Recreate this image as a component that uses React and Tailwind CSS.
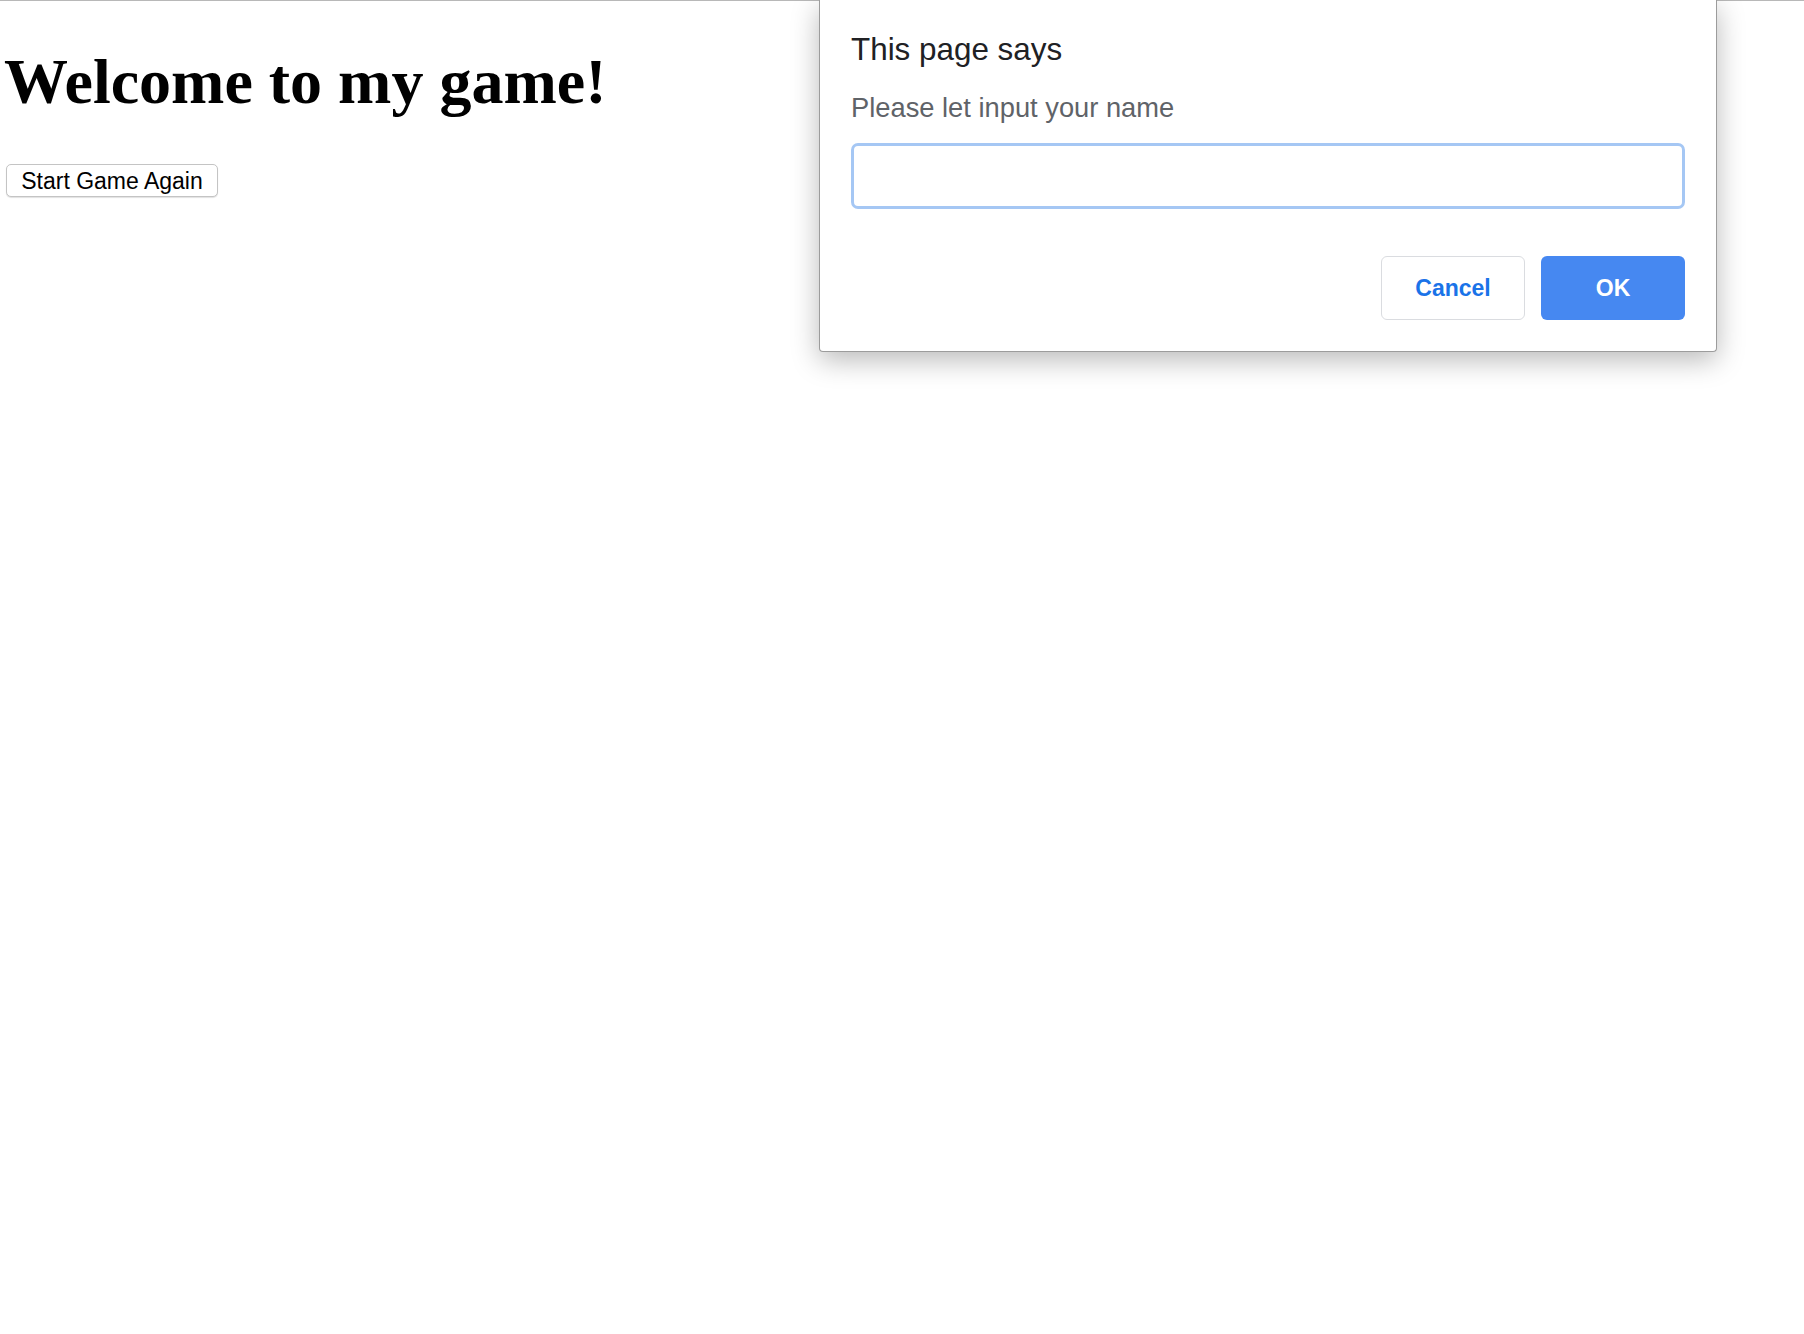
export default function App() {
  return (
    <div className="relative min-h-[1334px] w-full bg-white overflow-hidden">
      <div className="h-px w-full bg-[#b8b8b8]" />
      <div className="pl-[4px]">
        <h1 className="mt-[49px] text-[64px] leading-[63px] font-bold text-black whitespace-nowrap [font-family:'Liberation_Serif','Times_New_Roman',serif]">
          Welcome to my game!
        </h1>
        <button className="mt-[51px] ml-[2px] block h-[33px] w-[212px] rounded-[5px] border border-[#c4c4c4] bg-white pt-px text-center text-[23px] leading-[30px] text-black shadow-[0_1px_1px_rgba(0,0,0,0.12)] [font-family:'Liberation_Sans',Arial,sans-serif]">
          Start Game Again
        </button>
      </div>

      <div className="absolute left-[819px] top-0 w-[898px] rounded-b-[4px] border border-t-0 border-[#9c9c9c] bg-white px-[31px] pt-[32px] pb-[31px] shadow-[0_8px_28px_rgba(0,0,0,0.28)] [font-family:'Liberation_Sans',Arial,sans-serif]">
        <div className="text-[31.4px] leading-[36px] text-[#202124]">This page says</div>
        <div className="mt-[24px] text-[27.3px] leading-[32px] text-[#5f6368]">Please let input your name</div>
        <div className="mt-[19px] h-[66px] w-full rounded-[7px] border-[3px] border-[#a5c7f4] bg-white" />
        <div className="mt-[47px] flex justify-end gap-[16px]">
          <button className="flex h-[64px] w-[144px] items-center justify-center rounded-[6px] border border-[#dadce0] bg-white text-[23px] font-bold text-[#1a73e8]">
            Cancel
          </button>
          <button className="flex h-[64px] w-[144px] items-center justify-center rounded-[6px] bg-[#4688f1] text-[23px] font-bold text-white">
            OK
          </button>
        </div>
      </div>
    </div>
  );
}
